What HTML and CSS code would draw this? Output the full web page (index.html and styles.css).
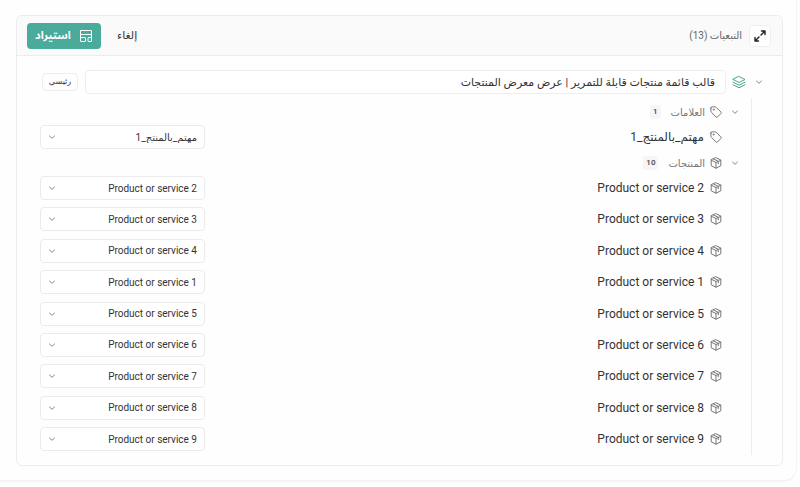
FILE: index.html
```html
<!DOCTYPE html>
<html lang="ar" dir="rtl">
<head>
<meta charset="utf-8">
<title>التبعيات</title>
<link rel="stylesheet" href="styles.css">
</head>
<body>
<svg class="defs" aria-hidden="true">
  <symbol id="chevron" viewBox="0 0 10 10"><path d="M2.500 4 5 6.300 7.500 4"/></symbol>
  <symbol id="tag" viewBox="0 0 12 12"><path d="M.8 2.200 1 5.400a1.400 1.400 0 0 0 .4.900l4.600 4.600a1.100 1.100 0 0 0 1.500 0l3.400-3.400a1.100 1.100 0 0 0 0-1.500L6.300 1.400a1.400 1.400 0 0 0-.9-.4L2.200.8A1.300 1.300 0 0 0 .8 2.200Z"/><circle cx="3.600" cy="3.600" r=".5"/></symbol>
  <symbol id="box" viewBox="0 0 12 12"><path d="M6 .8 10.800 3v5.800L6 11.200 1.200 8.800V3ZM1.200 3.200 6 5.500l4.800-2.300M6 5.500v5.700M3.500 2 8.300 4.300v2.400"/></symbol>
</svg>
<main class="page">
  <section class="card">
    <header class="bar">
      <div class="title">
        <button class="expand" aria-label="توسيع"><svg viewBox="0 0 14 14"><path d="M8.500 2H12v3.500M12 2 8 6M5.500 12H2V8.500M2 12l4-4"/></svg></button>
        <span>التبعيات (13)</span>
      </div>
      <div class="actions">
        <button class="cancel">إلغاء</button>
        <button class="import"><svg viewBox="0 0 14 14"><rect x="1.500" y="1.500" width="11" height="4" rx=".5"/><path d="M1.500 5.500V8.500M12.500 5.500V8.500"/><rect x="1.500" y="8.500" width="5" height="4" rx=".5"/><rect x="9" y="8.500" width="3.500" height="4" rx=".5"/></svg><span>استيراد</span></button>
      </div>
    </header>
    <div class="content">
      <div class="root">
        <svg class="chevron"><use href="#chevron"/></svg>
        <svg class="layers" viewBox="0 0 14 14"><path d="M7 1.500 13 4.500 7 7.500 1 4.500ZM1 7.200l6 3 6-3M1 9.800l6 3 6-3"/></svg>
        <input class="name" type="text" aria-label="اسم القالب" value="قالب قائمة منتجات قابلة للتمرير | عرض معرض المنتجات">
        <span class="main-tag">رئيسي</span>
      </div>
      <div class="tree">
        <div class="group"><svg class="chevron"><use href="#chevron"/></svg><svg class="icon"><use href="#tag"/></svg><span>العلامات</span><b class="count">1</b></div>
        <div class="row"><svg class="icon"><use href="#tag"/></svg><label for="t1">مهتم_بالمنتج_1</label><div class="pick"><select id="t1"><option>مهتم_بالمنتج_1</option></select><svg class="chevron"><use href="#chevron"/></svg></div></div>
        <div class="group"><svg class="chevron"><use href="#chevron"/></svg><svg class="icon"><use href="#box"/></svg><span>المنتجات</span><b class="count">10</b></div>
        <div class="products">
          <div class="row"><svg class="icon"><use href="#box"/></svg><label for="p2">Product or service 2</label><div class="pick"><select id="p2"><option>Product or service 2</option></select><svg class="chevron"><use href="#chevron"/></svg></div></div>
          <div class="row"><svg class="icon"><use href="#box"/></svg><label for="p3">Product or service 3</label><div class="pick"><select id="p3"><option>Product or service 3</option></select><svg class="chevron"><use href="#chevron"/></svg></div></div>
          <div class="row"><svg class="icon"><use href="#box"/></svg><label for="p4">Product or service 4</label><div class="pick"><select id="p4"><option>Product or service 4</option></select><svg class="chevron"><use href="#chevron"/></svg></div></div>
          <div class="row"><svg class="icon"><use href="#box"/></svg><label for="p1">Product or service 1</label><div class="pick"><select id="p1"><option>Product or service 1</option></select><svg class="chevron"><use href="#chevron"/></svg></div></div>
          <div class="row"><svg class="icon"><use href="#box"/></svg><label for="p5">Product or service 5</label><div class="pick"><select id="p5"><option>Product or service 5</option></select><svg class="chevron"><use href="#chevron"/></svg></div></div>
          <div class="row"><svg class="icon"><use href="#box"/></svg><label for="p6">Product or service 6</label><div class="pick"><select id="p6"><option>Product or service 6</option></select><svg class="chevron"><use href="#chevron"/></svg></div></div>
          <div class="row"><svg class="icon"><use href="#box"/></svg><label for="p7">Product or service 7</label><div class="pick"><select id="p7"><option>Product or service 7</option></select><svg class="chevron"><use href="#chevron"/></svg></div></div>
          <div class="row"><svg class="icon"><use href="#box"/></svg><label for="p8">Product or service 8</label><div class="pick"><select id="p8"><option>Product or service 8</option></select><svg class="chevron"><use href="#chevron"/></svg></div></div>
          <div class="row"><svg class="icon"><use href="#box"/></svg><label for="p9">Product or service 9</label><div class="pick"><select id="p9"><option>Product or service 9</option></select><svg class="chevron"><use href="#chevron"/></svg></div></div>
        </div>
      </div>
    </div>
  </section>
</main>
</body>
</html>
```
FILE: styles.css
```css
* { box-sizing: border-box; }
body {
  margin: 0;
  min-height: 100vh;
  display: flex;
  padding: 0 3px 5px 0;
  background: #fefefe;
  color: #333;
  font-family: Roboto, "DejaVu Sans", sans-serif;
  font-size: 12px;
  direction: ltr;
}
button, input, select { font: inherit; color: inherit; margin: 0; }
svg { fill: none; stroke: currentColor; stroke-linecap: round; stroke-linejoin: round; flex: none; }
.defs { position: absolute; width: 0; height: 0; }
.page {
  flex: 1;
  display: flex;
  direction: rtl;
  padding: 15px 13px 14px 16px;
  border-right: 1px solid #f4f4f4;
  border-bottom: 2px solid #f3f3f3;
  border-bottom-right-radius: 14px;
}
.card {
  flex: 1;
  display: flex;
  flex-direction: column;
  border: 1px solid #ececec;
  border-radius: 6px;
  overflow: hidden;
}
.bar {
  display: flex;
  justify-content: space-between;
  align-items: center;
  height: 40px;
  padding: 0 11px 0 10px;
  background: #fafafa;
  border-bottom: 1px solid #ececec;
}
.title, .actions { display: flex; align-items: center; }
.title { gap: 7px; font-size: 10px; color: #666; }
.actions { gap: 16px; }
.expand {
  display: flex;
  align-items: center;
  justify-content: center;
  width: 22px;
  height: 22px;
  padding: 0;
  background: #fff;
  border: 1px solid #eee;
  border-radius: 4px;
  color: #222;
}
.expand svg { width: 14px; height: 14px; stroke-width: 1.4; }
.cancel { border: 0; background: none; padding: 0; font-weight: 500; font-size: 11px; }
.import {
  display: flex;
  align-items: center;
  justify-content: space-between;
  width: 74px;
  height: 26px;
  padding: 0 8px;
  border: 0;
  border-radius: 4px;
  background: #4aaa9b;
  color: #fff;
  font-family: Roboto, "Noto Sans Arabic", sans-serif;
  font-weight: 700;
  font-size: 11px;
}
.import svg { width: 14px; height: 14px; }
.content { flex: 1; display: flex; flex-direction: column; padding: 14px 18px 10px 23px; }
.root { display: flex; align-items: center; height: 24px; }
.chevron { width: 10px; height: 10px; color: #888; }
.layers { width: 14px; height: 14px; color: #4aa48b; margin-right: 8px; }
.name {
  flex: 1;
  min-width: 0;
  height: 24px;
  margin: 0 6px 0 7px;
  padding: 0 10px;
  border: 1px solid #eee;
  border-radius: 4px;
  background: #fff;
  font-size: 11px;
}
.main-tag {
  width: 36px;
  line-height: 16px;
  margin-left: 2px;
  text-align: center;
  font-size: 8px;
  border: 1px solid #eee;
  border-radius: 4px;
}
.tree {
  flex: 1;
  display: flex;
  flex-direction: column;
  margin: 4px 12px 0 0;
  padding: 1px 11px 4px 0;
  border-right: 1px solid #eee;
}
.group { display: flex; align-items: center; height: 26px; font-size: 10px; color: #777; }
.row + .group { margin-top: 1px; }
.icon { width: 12px; height: 12px; color: #777; }
.group .icon { margin: 0 8px 0 5px; }
.count {
  margin-right: 10px;
  padding: 0 3px;
  line-height: 14px;
  border-radius: 3px;
  background: #f6f6f6;
  color: #444;
  font-size: 8px;
  font-weight: 500;
}
.row { display: flex; align-items: center; height: 24px; padding-right: 18px; }
.row label { flex: 1; margin-right: 6px; }
.pick { display: grid; align-items: center; width: 22%; min-width: 165px; }
.pick > * { grid-area: 1 / 1; }
.pick select {
  appearance: none;
  width: 100%;
  height: 24px;
  padding: 0 7px 0 24px;
  border: 1px solid #ebebeb;
  border-radius: 4px;
  background: #fff;
  font-size: 10px;
}
.pick .chevron { justify-self: end; margin-left: 7px; pointer-events: none; }
.products { flex: 1; display: flex; flex-direction: column; justify-content: space-between; gap: 6px; }
```
